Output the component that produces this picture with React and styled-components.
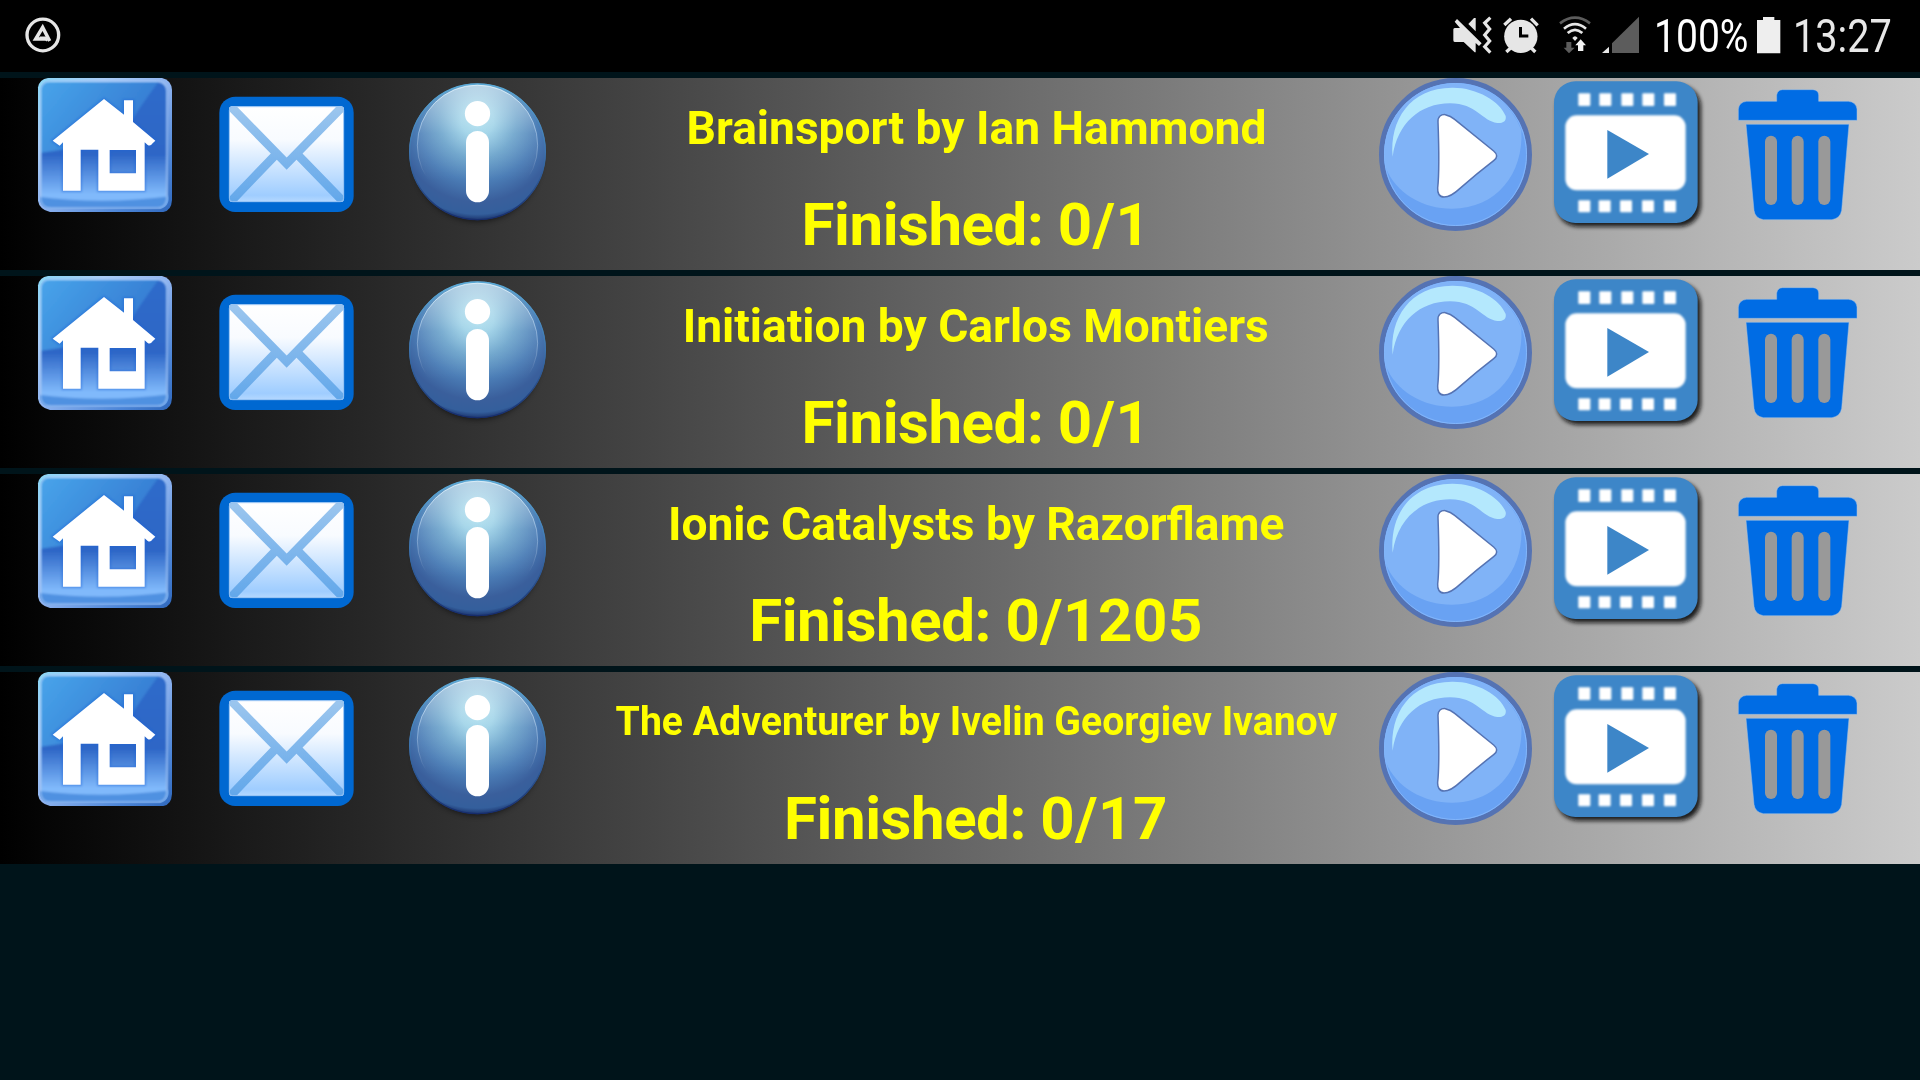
import React from "react";
import styled, { createGlobalStyle } from "styled-components";

const GlobalStyle = createGlobalStyle`
  html, body { margin: 0; background: #00141a; }
  body { font-family: Roboto, "Noto Sans", sans-serif; overflow: hidden; }
  svg { display: block; flex: none; }
`;

const Screen = styled.main`
  width: 1920px;
  height: 1080px;
  background: #00141a;
  overflow: hidden;
`;

const StatusBar = styled.header`
  height: 72px;
  background: #000;
  display: flex;
  align-items: center;
  padding: 0 30px 0 25px;
`;

const StatusIcon = styled.svg`
  height: 72px;
  width: ${(p) => p.$w}px;
  margin-left: ${(p) => p.$gap || 0}px;
`;

const Spacer = styled.div`
  flex: 1;
`;

const StatusText = styled.span`
  width: ${(p) => p.$w}px;
  margin-left: ${(p) => p.$gap}px;
  color: ${(p) => p.$color};
  font-size: 45.5px;
  line-height: 72px;
  white-space: nowrap;
  padding-top: 1px;
  transform: scaleX(${(p) => p.$scale});
  transform-origin: left center;
`;

const List = styled.section`
  display: flex;
  flex-direction: column;
  gap: 6px;
  padding-top: 6px;
`;

const Row = styled.article`
  height: 192px;
  display: flex;
  align-items: flex-start;
  padding-left: 38px;
  box-sizing: border-box;
  background: linear-gradient(90deg, #000, #cbcbcb);
`;

const IconButton = styled.button`
  border: 0;
  padding: 0;
  background: none;
  flex: none;
  margin: ${(p) => p.$top || 0}px 0 0 ${(p) => p.$gap || 0}px;
`;

const Art = styled.svg`
  width: ${(p) => p.$w}px;
  height: ${(p) => p.$h}px;
  overflow: visible;
`;

const Info = styled.div`
  flex: none;
  width: 806px;
  height: 192px;
  margin-left: 27px;
  display: flex;
  flex-direction: column;
  align-items: center;
  color: #ff0;
  font-weight: 700;
  white-space: nowrap;
`;

const Title = styled.h2`
  flex: none;
  margin: 0;
  padding-top: ${(p) => (p.$small ? 20 : 21)}px;
  height: 102px;
  box-sizing: border-box;
  font-size: ${(p) => (p.$small ? 41 : 47)}px;
  line-height: 58px;
  transform: scaleX(${(p) => (p.$small ? 0.956 : 0.981)});
`;

const Finished = styled.p`
  flex: none;
  margin: 0;
  font-size: 60px;
  line-height: 90px;
`;

const Label = styled.span`
  letter-spacing: -0.45px;
`;

const Count = styled.span`
  letter-spacing: 0.5px;
`;

function HomeIcon() {
  return (
    <Art $w={134} $h={134} viewBox="114 234 402 402">
      <defs>
        <linearGradient id="hBase" x1="0" y1="0" x2="0" y2="1">
          <stop offset="0" stopColor="#2f6bca" />
          <stop offset=".58" stopColor="#2d66c6" />
          <stop offset=".9" stopColor="#80b9fb" />
          <stop offset="1" stopColor="#80b9fb" />
        </linearGradient>
        <linearGradient id="hGloss" x1="0" y1="0" x2="1" y2="0.5">
          <stop offset="0" stopColor="#48a4ea" />
          <stop offset="1" stopColor="#3478d0" />
        </linearGradient>
        <linearGradient id="hEdge" x1="0" y1="0" x2="1" y2="1">
          <stop offset="0" stopColor="#8ad6f6" />
          <stop offset=".25" stopColor="#a9cdf8" />
          <stop offset=".5" stopColor="#8fb4f0" />
          <stop offset=".8" stopColor="#4d86d8" />
          <stop offset="1" stopColor="#2f68bd" />
        </linearGradient>
        <clipPath id="hClip"><rect x="120" y="240" width="386" height="388" rx="32" /></clipPath>
        <filter id="hBlur" x="-10%" y="-10%" width="120%" height="120%"><feGaussianBlur stdDeviation="3" /></filter>
      </defs>
      <path d="M144 234H486Q514 240 516 270V600Q514 632 490 636H150Q118 628 114 602V262Q118 238 144 234Z" fill="url(#hEdge)" />
      <g clipPath="url(#hClip)">
        <g filter="url(#hBlur)">
          <rect x="123" y="246" width="378" height="374" rx="28" fill="url(#hBase)" />
          <path d="M123 262Q126 246 145 246H475Q420 320 390 370Q300 440 123 458Z" fill="url(#hGloss)" />
          <path d="M114 590Q310 615 516 588V626H114Z" fill="#4f91e1" />
        </g>
        <rect x="121" y="243" width="380" height="382" rx="28" fill="none" stroke="#a9c9f7" strokeWidth="6" opacity=".7" filter="url(#hBlur)" />
      </g>
      <path d="M312 297L372 344V301H399V366L466 422L445 438L434 427V572H295V449H242V572H189V427L178 437L158 422ZM329 450V520H408V450Z" fill="none" stroke="#1f63d8" strokeWidth="8" opacity=".45" filter="url(#hBlur)" />
      <path fillRule="evenodd" d="M312 297L372 344V301H399V366L466 422L458 430Q451 440 443 435L434 427V572H295V449H242V572H189V427L179 437L158 422ZM329 450V520H408V450Z" fill="#fff" />
    </Art>
  );
}

function MailIcon() {
  return (
    <Art $w={135} $h={117} viewBox="57 79 405 351">
      <defs>
        <linearGradient id="mPaper" x1="0" y1="0" x2="0" y2="1">
          <stop offset="0" stopColor="#fff" />
          <stop offset=".35" stopColor="#f8fbff" />
          <stop offset=".93" stopColor="#9fcdff" />
          <stop offset="1" stopColor="#b5d8ff" />
        </linearGradient>
        <linearGradient id="mLine" gradientUnits="userSpaceOnUse" x1="0" y1="110" x2="0" y2="398">
          <stop offset="0" stopColor="#9cc6ee" />
          <stop offset="1" stopColor="#62a7ea" />
        </linearGradient>
        <clipPath id="mClip"><rect x="87" y="110" width="345" height="287" rx="12" /></clipPath>
        <filter id="mSoft" x="-5%" y="-5%" width="110%" height="110%"><feGaussianBlur stdDeviation="1.800" /></filter>
      </defs>
      <rect x="58" y="81" width="403" height="346" rx="48" fill="#0068d1" filter="url(#mSoft)" />
      <rect x="87" y="110" width="345" height="287" rx="10" fill="url(#mPaper)" />
      <g clipPath="url(#mClip)">
        <g fill="none" stroke="url(#mLine)" strokeWidth="26" filter="url(#mSoft)">
          <path d="M224 258L90 398M296 258L432 398" />
          <path d="M88 106L260 282L432 106" />
        </g>
      </g>
      <rect x="88" y="111" width="343" height="285" rx="10" fill="none" stroke="#91c0f3" strokeWidth="3" />
    </Art>
  );
}

function InfoIcon() {
  return (
    <Art $w={137} $h={138} viewBox="627 38 411 414">
      <defs>
        <radialGradient id="iBall" gradientUnits="userSpaceOnUse" cx="832" cy="150" r="306">
          <stop offset="0" stopColor="#a9ddee" />
          <stop offset=".16" stopColor="#9bd1e7" />
          <stop offset=".38" stopColor="#6ba3cb" />
          <stop offset=".6" stopColor="#4b7db6" />
          <stop offset=".8" stopColor="#3a5f9c" />
          <stop offset=".92" stopColor="#345f9c" />
          <stop offset="1" stopColor="#12245c" />
        </radialGradient>
        <linearGradient id="iGloss" x1="0" y1="0" x2="0" y2="1">
          <stop offset="0" stopColor="#fff" stopOpacity=".5" />
          <stop offset=".4" stopColor="#fff" stopOpacity=".1" />
          <stop offset=".8" stopColor="#fff" stopOpacity="0" />
        </linearGradient>
        <linearGradient id="iRim" x1="0" y1="0" x2="0" y2="1">
          <stop offset="0" stopColor="#e6f7ff" stopOpacity=".75" />
          <stop offset=".5" stopColor="#cfe6ff" stopOpacity=".35" />
          <stop offset=".75" stopColor="#fff" stopOpacity="0" />
        </linearGradient>
        <linearGradient id="iEdge" x1="0" y1="0" x2="0" y2="1">
          <stop offset="0" stopColor="#5aa9d6" />
          <stop offset=".5" stopColor="#3d74ae" />
          <stop offset="1" stopColor="#162c6c" />
        </linearGradient>
        <filter id="iBlur" x="-20%" y="-20%" width="140%" height="140%"><feGaussianBlur stdDeviation="9" /></filter>
      </defs>
      <ellipse cx="832" cy="268" rx="188" ry="184" fill="#000" opacity=".65" filter="url(#iBlur)" />
      <circle cx="832.5" cy="244.5" r="205" fill="url(#iBall)" />
      <circle cx="832.5" cy="244.5" r="203.5" fill="none" stroke="url(#iEdge)" strokeWidth="4" />
      <circle cx="832.5" cy="225" r="181" fill="url(#iGloss)" />
      <circle cx="832.5" cy="225" r="180.5" fill="none" stroke="url(#iRim)" strokeWidth="3" />
      <circle cx="832.5" cy="130" r="38" fill="#fff" />
      <rect x="798" y="182" width="69" height="214" rx="34.5" fill="#fff" />
    </Art>
  );
}

function PlayIcon() {
  return (
    <Art $w={153} $h={153} viewBox="57 54 459 459">
      <circle cx="286.500" cy="283.500" r="222" fill="#69a2f3" stroke="#5573b3" strokeWidth="15" />
      <path d="M76 320A212 212 0 0 1 286 70A212 212 0 0 1 484 210C492 340 410 446 276 446C190 446 106 400 76 320Z" fill="#80b3f7" />
      <circle cx="286.500" cy="283.500" r="213" fill="none" stroke="#83b6fb" strokeWidth="3" />
      <path d="M98 290C88 180 150 84 276 83C350 82 420 124 437 168C440 184 428 190 412 189C366 184 350 130 270 130C180 130 112 190 98 290Z" fill="#b4e8fd" />
      <path d="M234 186C233 168 244 163 256 164C266 166 275 170 284 178L401 273Q419 288 401 302C362 332 332 357 300 385C282 402 268 411 252 411C238 411 232 400 233 384C239 330 236 240 234 186Z" fill="#fff" stroke="#5573b3" strokeWidth="4.500" />
    </Art>
  );
}

function FilmIcon() {
  const top = [115, 178, 244, 307, 372];
  const bottom = [115, 176, 240, 306, 372];
  return (
    <Art $w={149} $h={147.333} viewBox="42 63 447 442">
      <defs>
        <filter id="fShadow" x="-10%" y="-10%" width="120%" height="120%"><feGaussianBlur stdDeviation="6" /></filter>
        <filter id="fSoft" x="-10%" y="-10%" width="120%" height="120%"><feGaussianBlur stdDeviation="2.500" /></filter>
      </defs>
      <rect x="50" y="76" width="433" height="424" rx="64" fill="#111" opacity=".9" filter="url(#fShadow)" />
      <rect x="42" y="64" width="431" height="425" rx="64" fill="#3d86c8" />
      <g fill="#fff" filter="url(#fSoft)">
        <rect x="76" y="166" width="361" height="225" rx="34" />
        {top.map((x) => <rect key={x} x={x} y="100" width="36" height="38" rx="3" />)}
        {bottom.map((x) => <rect key={x} x={x} y="421" width="36" height="36" rx="3" />)}
      </g>
      <path d="M202 210L327 282L202 356Z" fill="#3d86c8" />
    </Art>
  );
}

function TrashIcon() {
  return (
    <Art $w={119} $h={131.333} viewBox="84 86 357 394">
      <path d="M85 180V146Q88 125 110 123H200V104Q202 89 217 88H309Q325 89 326 104V123H415Q438 125 441 146V180Z" fill="#006ce4" stroke="#9fc0e4" strokeWidth="1.500" />
      <path d="M108 192H417L395 450Q391 474 366 478H160Q135 474 132 450Z" fill="#006ce4" stroke="#9fc0e4" strokeWidth="1.500" />
      {[165, 245, 325].map((x) => (
        <rect key={x} x={x} y="226" width="36" height="208" rx="18" fill="#999" />
      ))}
    </Art>
  );
}

function LevelRow({ title, done, small }) {
  return (
    <Row>
      <IconButton aria-label="Home"><HomeIcon /></IconButton>
      <IconButton aria-label="Mail" $gap={47} $top={18}><MailIcon /></IconButton>
      <IconButton aria-label="Info" $gap={55} $top={4.67}><InfoIcon /></IconButton>
      <Info>
        <Title $small={small}>{title}</Title>
        <Finished><Label>Finished: </Label><Count>{done}</Count></Finished>
      </Info>
      <IconButton aria-label="Play"><PlayIcon /></IconButton>
      <IconButton aria-label="Replay" $gap={22} $top={3}><FilmIcon /></IconButton>
      <IconButton aria-label="Delete" $gap={35} $top={10.67}><TrashIcon /></IconButton>
    </Row>
  );
}

const rows = [
  { title: "Brainsport by Ian Hammond", done: "0/1" },
  { title: "Initiation by Carlos Montiers", done: "0/1" },
  { title: "Ionic Catalysts by Razorflame", done: "0/1205" },
  { title: "The Adventurer by Ivelin Georgiev Ivanov", done: "0/17", small: true },
];

export default function App() {
  return (
    <Screen>
      <GlobalStyle />
      <StatusBar>
        <StatusIcon $w={36} viewBox="75 0 108 216" fill="none" stroke="#e6e6e6">
          <circle cx="128.500" cy="105" r="47.500" strokeWidth="10" />
          <path d="M139 117H107L128 82L149 123" strokeWidth="10.500" />
          <path d="M119 113H135L142 122" strokeWidth="7" />
        </StatusIcon>
        <Spacer />
        <StatusIcon $w={39} viewBox="65 0 117 216" fill="#e6e6e6">
          <path d="M66 88Q67 84 71 84H86L70 65L77 57L151 130L143 138L133 129V157H130L97 126H70Q66 126 66 121Z" />
          <path d="M111 72L128 54H133V94Z" />
          <path d="M177 53L160 69L175 87L160 105L175 123L160 140L177 158" fill="none" stroke="#e6e6e6" strokeWidth="9.500" />
        </StatusIcon>
        <StatusIcon $w={36} $gap={11} viewBox="216 0 108 216" fill="#e6e6e6">
          <circle cx="269.500" cy="109" r="50" />
          <path d="M220 75L240 56M300 56L320 76M226 156L242 141M313 156L298 141" stroke="#e6e6e6" strokeWidth="10" />
          <path d="M268.500 81V108H292" stroke="#000" strokeWidth="9" fill="none" />
        </StatusIcon>
        <StatusIcon $w={32} $gap={20.5} viewBox="386 0 96 216" fill="none" strokeWidth="8">
          <path d="M389 70Q434 36 479 70" stroke="#5c5c5c" />
          <path d="M401 86Q434 59 467 86" stroke="#e6e6e6" />
          <path d="M412 99Q434 80 456 99" stroke="#e6e6e6" />
          <path d="M426 114Q434 104 442 114L434 123Z" fill="#e6e6e6" />
          <path d="M408 126H423V143H433L416 160L400 143H408Z" fill="#5c5c5c" />
          <path d="M451 118L467 136H459V153H443V136H435Z" fill="#f4f4f4" />
        </StatusIcon>
        <StatusIcon $w={37} $gap={11} viewBox="516 0 111 216">
          <path d="M516 159L537 140V159Z" fill="#e6e6e6" />
          <path d="M546 159V130L627 50V159Z" fill="#5c5c5c" />
        </StatusIcon>
        <StatusText $w={92} $gap={15} $color="#fff" $scale={0.858}>100%</StatusText>
        <StatusIcon $w={24} $gap={10.5} viewBox="981 0 72 216">
          <path d="M981 60H999V51H1033V60H1051V160H981Z" fill="#eee" />
        </StatusIcon>
        <StatusText $w={97} $gap={12.5} $color="#e8e8e8" $scale={0.872}>13:27</StatusText>
      </StatusBar>
      <List>
        {rows.map((r) => <LevelRow key={r.title} {...r} />)}
      </List>
    </Screen>
  );
}
